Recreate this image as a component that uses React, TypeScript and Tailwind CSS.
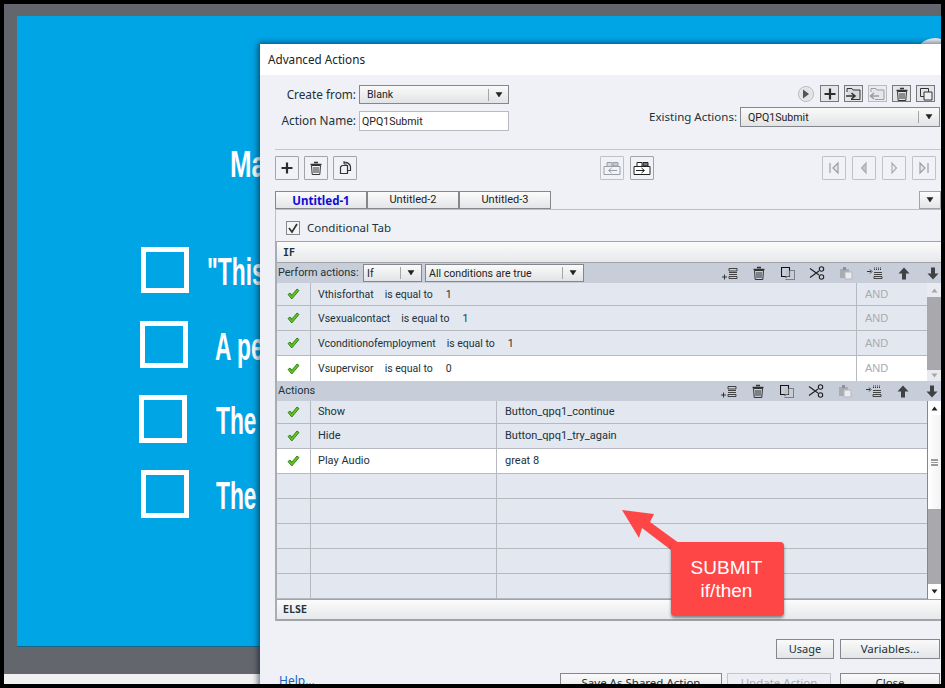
import React from "react";

const Svg = ({ children, w = 16, h = 16, className = "" }: { children: React.ReactNode; w?: number; h?: number; className?: string }) => (
  <svg width={w} height={h} viewBox={`0 0 ${w} ${h}`} className={className} fill="none" shapeRendering="geometricPrecision">
    {children}
  </svg>
);

const Plus = ({ c = "#2c2c2c" }: { c?: string }) => (
  <Svg w={14} h={14}><path d="M7 1.5v11M1.5 7h11" stroke={c} strokeWidth="2.2" /></Svg>
);
const Trash = ({ c = "#333" }: { c?: string }) => (
  <Svg w={14} h={16}>
    <path d="M5 2.5h4M1.5 4.5h11" stroke={c} strokeWidth="1.4" />
    <path d="M2.5 5.5h9l-.7 9h-7.6z" stroke={c} strokeWidth="1" />
    <path d="M5 7v6M7 7v6M9 7v6" stroke={c} strokeWidth="1" />
  </Svg>
);
const Dup = () => (
  <Svg w={14} h={16}>
    <path d="M6 2.5a5 5 0 0 1 6.5 4.5v3.5H9.5" stroke="#333" strokeWidth="1.2" />
    <path d="M4 5.5h5.5v8H2.5V7z" stroke="#333" strokeWidth="1.2" />
    <path d="M6 1v3h3M9 2.5l3 3" stroke="#333" strokeWidth="1" />
  </Svg>
);
const TabIcon = ({ dim, flip }: { dim?: boolean; flip?: boolean }) => {
  const c = dim ? "#9a9da3" : "#222";
  return (
    <Svg w={18} h={16}>
      <path d="M1 6.5h16v8H1z" fill={dim ? "#f2f3f6" : "#fff"} stroke={c} />
      <path d="M4 6V2.5h5V6" fill={dim ? "#d8d9dc" : "#fff"} stroke={c} />
      <path d="M10 6V2.5h5V6z" fill={dim ? "#c8c9cc" : "#777"} stroke={c} />
      {flip ? <path d="M14 10.5H6M8.5 8l-3 2.5 3 2.5" stroke={c} /> : <path d="M3 10.5h8M8.5 8l3 2.5-3 2.5" stroke={c} />}
    </Svg>
  );
};
const FolderIcon = ({ dim }: { dim?: boolean }) => {
  const c = dim ? "#9a9da3" : "#333";
  return (
    <Svg w={17} h={14}>
      <path d="M2 5V1.5h5l1 1.5h7v9.5H6" stroke={c} fill={dim ? "#e5e6e9" : "#d8d9dc"} />
      {dim ? <path d="M10 9H2M5 6L1.5 9 5 12" stroke={c} strokeWidth="1.6" /> : <path d="M1 9h8M6.5 6L10 9l-3.5 3" stroke={c} strokeWidth="1.6" />}
    </Svg>
  );
};
const CopyBox = () => (
  <Svg w={14} h={14}>
    <path d="M1.5 1.5h8v8h-8z" stroke="#333" />
    <path d="M5 5h8v8H5z" stroke="#333" fill="#eceef3" />
  </Svg>
);
const Play = () => (
  <div className="flex h-4 w-4 items-center justify-center rounded-full border border-[#b8b8bc] bg-[#e2e3e6] shadow-[inset_0_0_2px_#fff]">
    <Svg w={8} h={10}><path d="M1 .5l6 4.5-6 4.5z" fill="#555" /></Svg>
  </div>
);
const Nav = ({ kind }: { kind: "first" | "prev" | "next" | "last" }) => (
  <Svg w={12} h={14}>
    {kind === "first" && <path d="M2 2v10M10 2v10L5 7z" stroke="#9a9da3" strokeWidth="1.2" fill="#e6e7ea" />}
    {kind === "prev" && <path d="M8 2v10L3.5 7z" stroke="#a9acb1" strokeWidth="1.2" fill="#c5c7cb" />}
    {kind === "next" && <path d="M4 2v10L8.5 7z" stroke="#a9acb1" strokeWidth="1.2" fill="#eceef2" />}
    {kind === "last" && <path d="M10 2v10M2 2v10L7 7z" stroke="#9a9da3" strokeWidth="1.2" fill="#e6e7ea" />}
  </Svg>
);
const Caret = () => (
  <Svg w={8} h={6}><path d="M1 .5h6L4 5z" fill="#222" stroke="#222" strokeWidth=".5" /></Svg>
);
const Check = () => (
  <Svg w={13} h={12}>
    <path d="M1 6.5L4.8 11 12 2.5 10 1 4.8 7.2 3 5z" fill="#62c51f" stroke="#2f7d18" strokeWidth=".9" />
    <path d="M3.5 6.2l1.3 1.6" stroke="#2f7d18" strokeWidth=".6" />
  </Svg>
);
const AddRow = () => (
  <Svg w={16} h={13}>
    <path d="M7 1.5h8v2.5H7zM7 5.5h8M7 7.5h8M7 9.5h8v2H7z" stroke="#333" strokeWidth=".9" />
    <path d="M0 10h5M2.500 7.500v5" stroke="#333" />
  </Svg>
);
const SmallCopy = () => (
  <Svg w={14} h={13}>
    <path d="M.5.5h8v9h-8z" stroke="#111" strokeWidth="1.1" />
    <path d="M4.500 3.500h4v6h-4z" fill="#bfc2c6" />
    <path d="M8.500 3.500h5v9H5v-3" stroke="#333" strokeDasharray="1 1" />
  </Svg>
);
const Scissors = () => (
  <Svg w={16} h={14}>
    <path d="M1 2.500l9 6.500M1 11.500l9-6.500" stroke="#222" strokeWidth="1.2" />
    <circle cx="12.500" cy="3" r="2.200" stroke="#222" strokeWidth="1.1" />
    <circle cx="12.500" cy="11" r="2.200" stroke="#222" strokeWidth="1.1" />
  </Svg>
);
const Paste = () => (
  <Svg w={14} h={14}>
    <path d="M1 3h9v9H1z" fill="#a8abb0" />
    <path d="M4 1h3v3H4z" fill="#8d9095" />
    <path d="M6 6h7v7H6z" fill="#e9ebf0" stroke="#b5b7bb" />
  </Svg>
);
const Insert = () => (
  <Svg w={16} h={13}>
    <path d="M7 1h8M7 2.500h8" stroke="#333" strokeDasharray="1 1" />
    <path d="M7 5.500h8M7 7.500h8M7 9.500h8v2H7z" stroke="#333" strokeWidth=".9" />
    <path d="M0 4.500h4M3 2.500l2 2-2 2" stroke="#333" />
  </Svg>
);
const Arrow = ({ down }: { down?: boolean }) => (
  <Svg w={12} h={13}>
    {down ? <path d="M4 .5h4v6h3.500L6 12.500.5 6.500H4z" fill="#3f4145" /> : <path d="M4 12.500h4v-6h3.500L6 .5.5 6.500H4z" fill="#3f4145" />}
  </Svg>
);

const IconBtn = ({ children, dim, className = "" }: { children: React.ReactNode; dim?: boolean; className?: string }) => (
  <div className={`flex h-[24px] w-[24px] items-center justify-center rounded-[1px] border ${dim ? "border-[#bfc1c6]" : "border-[#a2a4a9]"} bg-[#f0f2f7] ${className}`}>
    {children}
  </div>
);
const TopBtn = ({ children, dim }: { children: React.ReactNode; dim?: boolean }) => (
  <div className={`flex h-[17px] w-[19px] items-center justify-center border ${dim ? "border-[#b9bbc0]" : "border-[#77797e]"} ${dim ? "bg-[#e9ebf0]" : "bg-[#e4e5e9]"}`}>
    {children}
  </div>
);

const Select = ({ text, className, caretW = 20 }: { text: string; className: string; caretW?: number }) => (
  <div className={`flex items-center border border-[#85878c] bg-gradient-to-b from-[#fafafa] to-[#e2e3e5] font-['Roboto'] text-[10.600px] text-[#222] ${className}`}>
    <span className="flex-1 truncate pl-[7px] pt-[1px]">{text}</span>
    <span className="flex h-[12px] items-center justify-center border-l border-[#a3a5a9]" style={{ width: caretW }}><Caret /></span>
  </div>
);

const Toolbar = () => (
  <div className="flex items-center">
    {[<AddRow />, <Trash />, <SmallCopy />, <Scissors />, <Paste />, <Insert />, <Arrow />, <Arrow down />].map((ic, i) => (
      <span key={i} className="flex h-[16px] w-[29px] items-center justify-center">{ic}</span>
    ))}
  </div>
);

const bar = "border-y border-[#a1a3a8] bg-gradient-to-b from-[#fbfbfb] to-[#e7e8ea]";

const conds: [string, string, string, boolean][] = [
  ["Vthisforthat", "is equal to", "1", false],
  ["Vsexualcontact", "is equal to", "1", false],
  ["Vconditionofemployment", "is equal to", "1", false],
  ["Vsupervisor", "is equal to", "0", true],
];
const actions: [string, string, boolean][] = [
  ["Show", "Button_qpq1_continue", false],
  ["Hide", "Button_qpq1_try_again", false],
  ["Play Audio", "great 8", true],
  ["", "", false],
  ["", "", false],
  ["", "", false],
  ["", "", false],
  ["", "", false],
];

const Slide = () => (
  <div className="ml-[13px] mt-[12px] h-[631px] border-b border-[#17668a] bg-[#00a5e6] pt-[131px] font-['Liberation_Sans'] text-white">
    <div className="ml-[213px] h-[35px] origin-left scale-x-[0.72] text-[36px] font-bold leading-[35px]">Ma</div>
    <div className="mt-[65px] flex h-[46px] items-center">
      <div className="ml-[124px] h-[46px] w-[48px] border-[5px] border-white" />
      <span className="ml-[18px] mt-[4px] origin-left scale-x-[0.6] text-[38px] font-bold leading-none">"This</span>
    </div>
    <div className="mt-[28px] flex h-[47px] items-center">
      <div className="ml-[123px] h-[47px] w-[48px] border-[5px] border-white" />
      <span className="ml-[27px] mt-[4px] origin-left scale-x-[0.6] text-[38px] font-bold leading-none">A pe</span>
    </div>
    <div className="mt-[27px] flex h-[48px] items-center">
      <div className="ml-[122px] h-[48px] w-[48px] border-[5px] border-white" />
      <span className="ml-[29px] mt-[4px] origin-left scale-x-[0.6] text-[38px] font-bold leading-none">The</span>
    </div>
    <div className="mt-[27px] flex h-[48px] items-center">
      <div className="ml-[124px] h-[48px] w-[48px] border-[5px] border-white" />
      <span className="ml-[27px] mt-[4px] origin-left scale-x-[0.6] text-[38px] font-bold leading-none">The</span>
    </div>
  </div>
);

const Dialog = () => (
  <div className="absolute left-[256px] top-[40px] flex h-[660px] w-[700px] flex-col bg-[#eff1f7] font-['Noto_Sans',sans-serif] text-[11.500px] text-[#203239] shadow-[-2px_-1px_6px_rgba(0,20,40,0.6)]">
    <div className="flex h-[31px] items-center bg-white pl-[8px] pt-[1px] text-[11.700px] text-[#222]">Advanced Actions</div>

    <div className="flex h-[74px] items-start pt-[10px]">
      <div className="grid w-[249px] grid-cols-[96px_150px] gap-x-[3px] gap-y-[7px]">
        <span className="flex h-[19px] items-center justify-end text-[11.800px]">Create from:</span>
        <Select text="Blank" className="h-[19px] w-[150px]" />
        <span className="flex h-[19px] items-center justify-end text-[11.800px]">Action Name:</span>
        <div className="flex h-[20px] w-[150px] items-center border border-[#b9bbc0] bg-white pl-[2px] pt-[1px] font-['Roboto'] text-[10.600px] text-[#222]">QPQ1Submit</div>
      </div>
      <div className="ml-[139px] flex w-[292px] flex-col items-end">
        <div className="flex items-center gap-[5px] pr-[5px]">
          <span className="mr-[1px]"><Play /></span>
          <TopBtn><Plus /></TopBtn>
          <TopBtn><FolderIcon /></TopBtn>
          <TopBtn dim><FolderIcon dim /></TopBtn>
          <TopBtn><Trash /></TopBtn>
          <TopBtn><CopyBox /></TopBtn>
        </div>
        <div className="mt-[5px] flex items-center gap-[3px]">
          <span>Existing Actions:</span>
          <Select text="QPQ1Submit" className="h-[20px] w-[200px]" caretW={21} />
        </div>
      </div>
    </div>

    <div className="ml-[15px] border-t border-[#c3c5ca]" />

    <div className="ml-[15px] flex h-[41px] items-start pt-[6px]">
      <IconBtn><Plus /></IconBtn>
      <IconBtn className="ml-[5px]"><Trash /></IconBtn>
      <IconBtn className="ml-[5px]"><Dup /></IconBtn>
      <IconBtn dim className="ml-[243px]"><TabIcon dim flip /></IconBtn>
      <IconBtn className="ml-[6px]"><TabIcon /></IconBtn>
      <IconBtn dim className="ml-[168px]"><Nav kind="first" /></IconBtn>
      <IconBtn dim className="ml-[6px]"><Nav kind="prev" /></IconBtn>
      <IconBtn dim className="ml-[6px]"><Nav kind="next" /></IconBtn>
      <IconBtn dim className="ml-[6px]"><Nav kind="last" /></IconBtn>
    </div>

    <div className="ml-[15px] flex h-[19px] items-end border-b border-[#bcbec3]">
      {["Untitled-1", "Untitled-2", "Untitled-3"].map((t, i) => (
        <div key={t} className={`flex h-[18px] w-[92px] items-center justify-center border border-[#85878c] bg-gradient-to-b from-[#fbfbfb] to-[#e4e5e8] pt-[1px] ${i === 0 ? "font-bold text-[#0b0bd6]" : "font-['Roboto'] text-[11px] text-[#222]"}`}>{t}</div>
      ))}
      <div className="ml-[368px] flex h-[18px] w-[22px] items-center justify-center border border-[#a1a3a8] bg-gradient-to-b from-[#fbfbfb] to-[#e4e5e8]"><Caret /></div>
    </div>

    <div className="ml-[15px] flex h-[31px] items-center border-l border-[#bcbec3] pl-[10px] pt-[4px]">
      <div className="flex h-[14px] w-[14px] items-center justify-center border border-[#85878c] bg-[#f4f4f6]">
        <Svg w={12} h={12}><path d="M2 6l3 4 5-8" stroke="#333" strokeWidth="1.700" /></Svg>
      </div>
      <span className="ml-[7px] text-[11.500px]">Conditional Tab</span>
    </div>

    <div className="ml-[15px] flex flex-col border-l-2 border-[#a9acb2]">
      <div className={`flex h-[22px] items-center pl-[6px] font-['DejaVu_Sans_Mono'] text-[10px] font-bold ${bar}`}>IF</div>

      <div className="flex h-[20px] items-center bg-[#c8ced9] pl-[1px] pr-[1px] font-['Roboto'] text-[10.900px]">
        <span className="w-[85px] whitespace-nowrap">Perform actions:</span>
        <Select text="If" className="h-[18px] w-[59px] [&>span:first-child]:pl-[3px]" caretW={21} />
        <Select text="All conditions are true" className="ml-[3px] h-[18px] w-[159px] [&>span:first-child]:pl-[3px]" caretW={21} />
        <div className="ml-[131px]"><Toolbar /></div>
      </div>

      <div className="flex font-['Roboto'] text-[10.500px]">
        <div className="w-[650px]">
          {conds.map(([a, b, c, white]) => (
            <div key={a} className={`flex h-[25px] border-b border-[#b6b9bf] first:h-[23px] last:border-b-0 ${white ? "bg-white" : "bg-[#e3e7ef]"}`}>
              <div className="flex w-[34px] items-center justify-center border-r border-[#b6b9bf]"><Check /></div>
              <div className="flex flex-1 items-center gap-[11px] pl-[7px] pt-[1px]">
                <span>{a}</span><span>{b}</span><span className="ml-[2px]">{c}</span>
              </div>
              <div className="flex w-[71px] items-center border-l border-[#b6b9bf] pl-[8px] font-['Liberation_Sans'] text-[11px] text-[#a9abb0]">AND</div>
            </div>
          ))}
        </div>
        <div className="flex w-[14px] flex-col bg-[#a9a9ad]">
          <div className="flex h-[14px] items-center justify-center bg-[#e9ebf0]"><Svg w={7} h={5}><path d="M.5 4.500L3.500.5l3 4z" fill="#a8a8a8" /></Svg></div>
          <div className="flex-1" />
          <div className="flex h-[11px] items-center justify-center bg-[#e9ebf0]"><Svg w={7} h={5}><path d="M.5.5l3 4 3-4z" fill="#a8a8a8" /></Svg></div>
        </div>
      </div>

      <div className="flex h-[20px] items-center bg-[#c8ced9] pl-[1px] pr-[1px] font-['Roboto'] text-[11px]">
        <span className="w-[436px]">Actions</span>
        <Toolbar />
      </div>

      <div className="flex font-['Roboto'] text-[11px]">
        <div className="w-[650px]">
          {actions.map(([a, b, white], i) => (
            <div key={i} className={`flex h-[25px] border-b border-[#b6b9bf] first:h-[23px] ${white ? "bg-white" : "bg-[#e3e7ef]"}`}>
              <div className="flex w-[34px] items-center justify-center border-r border-[#b6b9bf]">{a && <Check />}</div>
              <div className="flex w-[186px] items-center border-r border-[#b6b9bf] pl-[7px] pt-[1px]">{a}</div>
              <div className="flex flex-1 items-center pl-[8px] pt-[1px]">{b}</div>
            </div>
          ))}
        </div>
        <div className="flex w-[14px] flex-col border-l border-[#85878c] bg-[#a9a9ad]">
          <div className="flex h-[14px] items-center justify-center bg-white"><Svg w={7} h={5}><path d="M.5 4.500L3.500.5l3 4z" fill="#222" /></Svg></div>
          <div className="flex h-[94px] flex-col items-center justify-center bg-gradient-to-r from-white to-[#f1f2f4]">
            <div className="h-[7px] w-[7px] border-y border-[#9a9a9a] bg-[linear-gradient(#9a9a9a_1px,transparent_1px)] bg-[length:100%_2px]" />
          </div>
          <div className="flex-1" />
          <div className="flex h-[15px] items-center justify-center bg-white"><Svg w={7} h={5}><path d="M.5.5l3 4 3-4z" fill="#222" /></Svg></div>
        </div>
      </div>

      <div className={`flex h-[22px] items-center pl-[6px] font-['DejaVu_Sans_Mono'] text-[10px] font-bold ${bar} border-b-2`}>ELSE</div>
    </div>

    <div className="flex h-[18px] flex-none" />
    <div className="flex justify-start pl-[516px] pt-0">
      <div className="flex h-[20px] w-[58px] items-center justify-center border border-[#85878c] bg-gradient-to-b from-[#fafafa] to-[#e4e5e8] text-[11px]">Usage</div>
      <div className="ml-[6px] flex h-[20px] w-[100px] items-center justify-center border border-[#85878c] bg-gradient-to-b from-[#fafafa] to-[#e4e5e8] text-[11.500px]">Variables...</div>
    </div>
    <div className="mt-[14px] flex items-start pl-[19px]">
      <span className="w-[281px] text-[12px] leading-[16px] text-[#1565c0] underline">Help...</span>
      <div className="flex h-[20px] w-[162px] items-center justify-center border border-[#85878c] bg-gradient-to-b from-[#fafafa] to-[#e4e5e8] text-[11.500px]">Save As Shared Action</div>
      <div className="ml-[5px] flex h-[20px] w-[104px] items-center justify-center border border-[#c3c5ca] bg-[#eceef3] text-[11.500px] text-[#a9abb0]">Update Action</div>
      <div className="ml-[9px] flex h-[20px] w-[100px] items-center justify-center border border-[#85878c] bg-gradient-to-b from-[#fafafa] to-[#e4e5e8] text-[11.500px]">Close</div>
    </div>
  </div>
);

export default function App() {
  return (
    <div className="h-[688px] w-[945px] overflow-hidden bg-black pb-[4px] pl-[4px] pr-[4px] pt-[4px]">
      <div className="relative h-[680px] w-[937px] overflow-hidden bg-[#63666d]">
        <Slide />
        <div className="mt-[27px] h-[10px] bg-[#f1f1f1]" />
        <div className="absolute left-[911px] top-[34px] h-[20px] w-[40px] rounded-t-full bg-[#e9ecf2]" />
        <Dialog />
        <svg className="absolute left-[612px] top-[500px]" width="80" height="60" viewBox="0 0 80 60" fill="none">
          <path d="M6 6L38 10 34 18 67 42 59 49 26 24 23 34z" fill="#ff4646" />
        </svg>
        <div className="absolute left-[667px] top-[538px] flex h-[74px] w-[113px] flex-col items-center justify-center rounded-[4px] bg-[#ff4646] pb-[1px] pr-[2px] font-['Liberation_Sans'] text-[19px] leading-[23px] text-white shadow-[0_2px_3px_rgba(0,0,0,0.45)]">
          <span>SUBMIT</span>
          <span>if/then</span>
        </div>
      </div>
    </div>
  );
}
